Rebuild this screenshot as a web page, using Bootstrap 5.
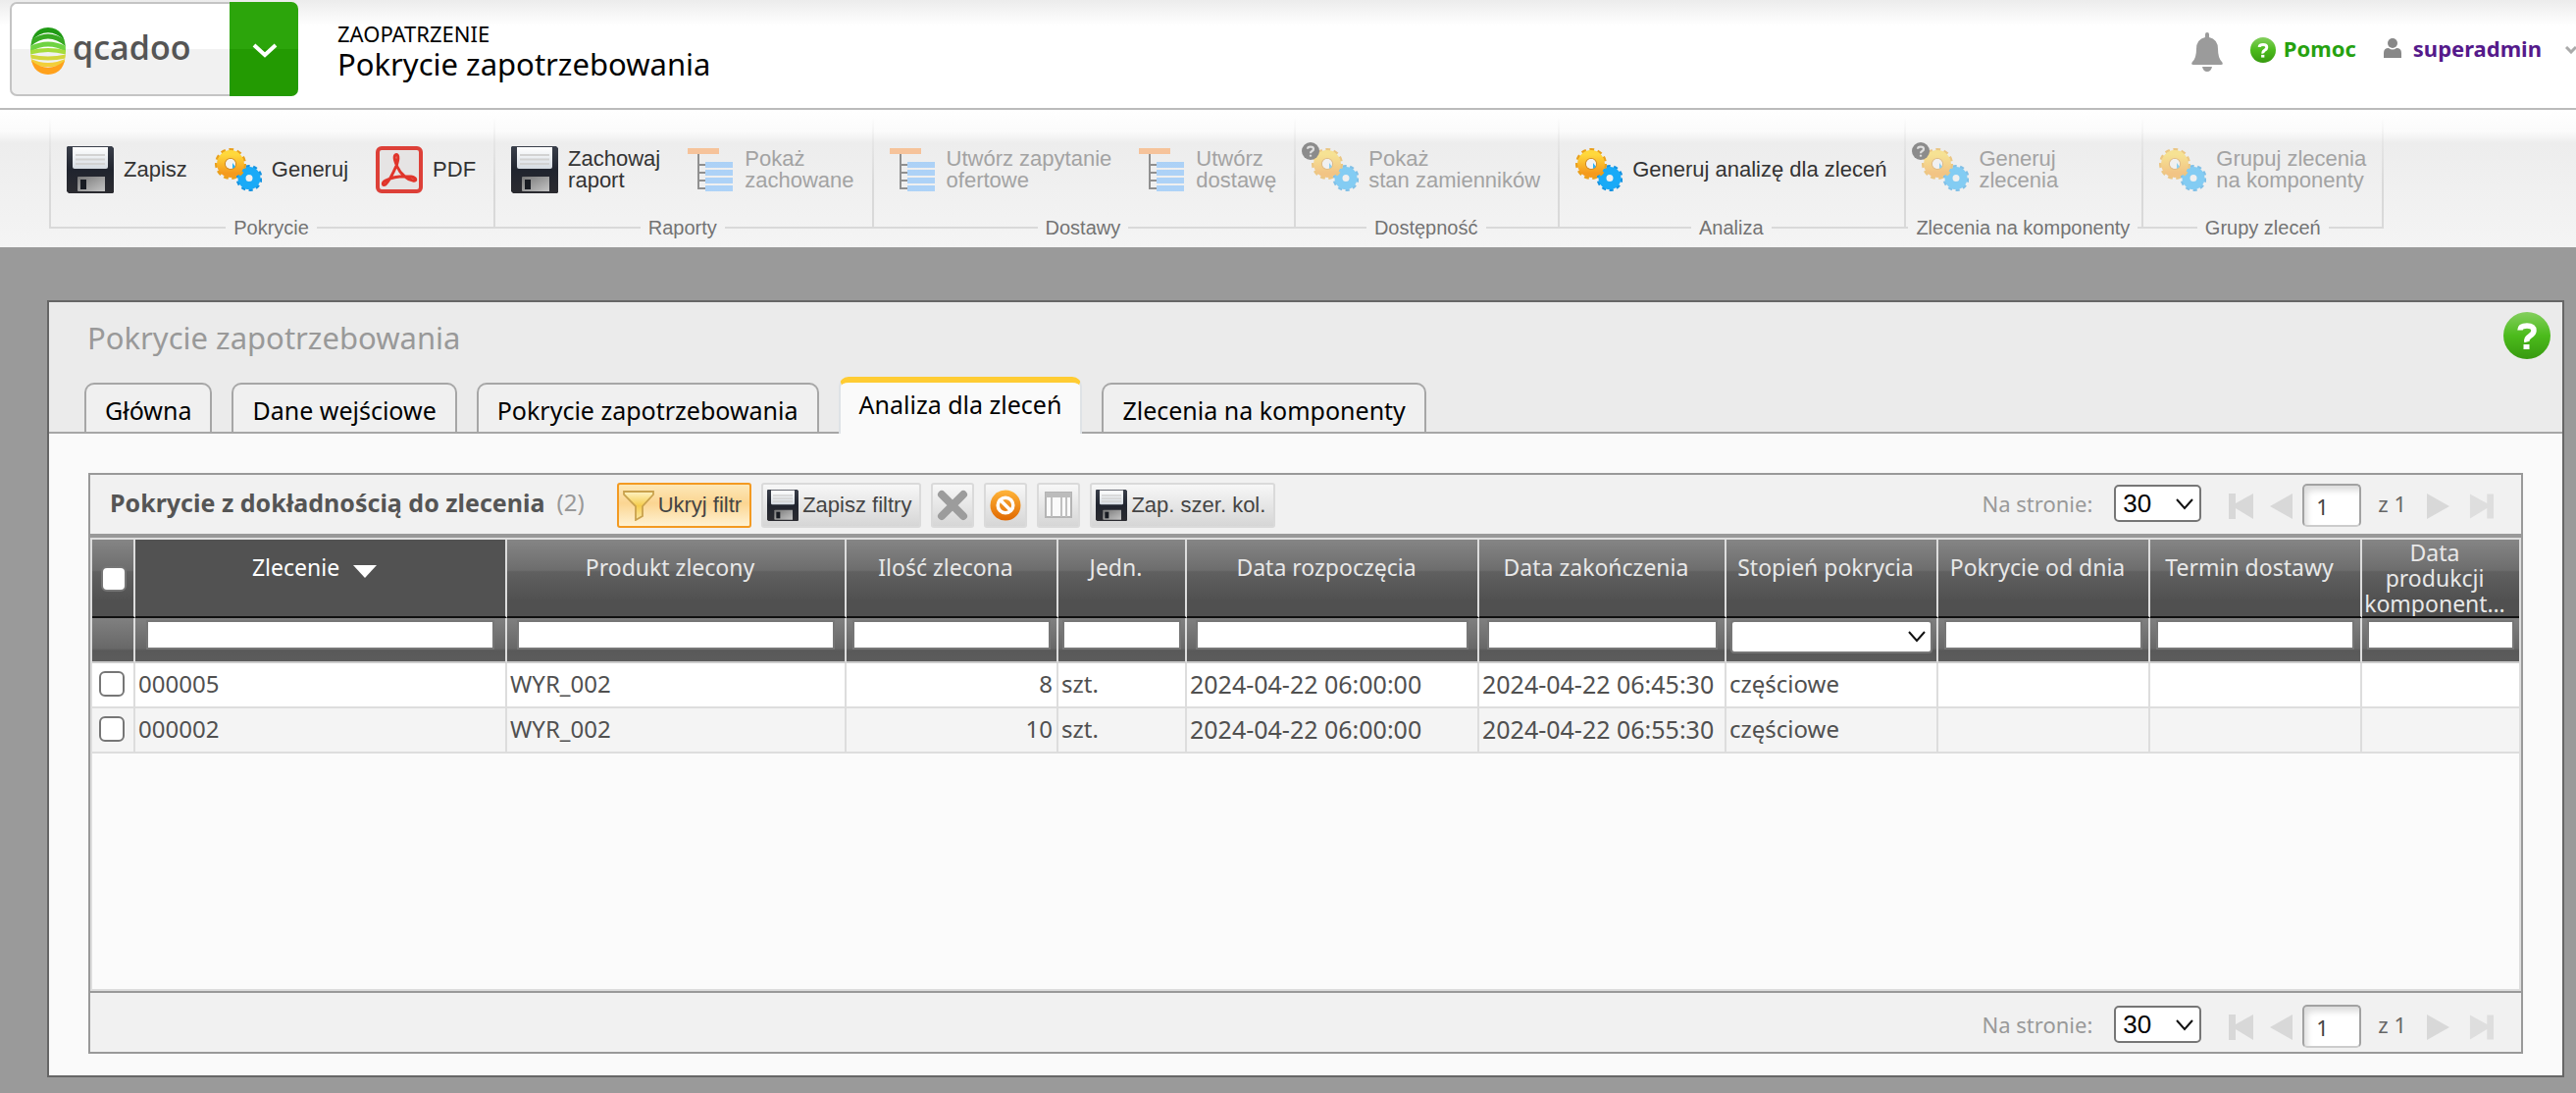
<!DOCTYPE html>
<html lang="pl">
<head>
<meta charset="utf-8">
<meta name="viewport" content="width=device-width, initial-scale=1">
<title>Pokrycie zapotrzebowania - qcadoo</title>
<link href="https://cdn.jsdelivr.net/npm/bootstrap@5.3.0/dist/css/bootstrap.min.css" rel="stylesheet">
<style>
:root{--ui:"Noto Sans","Open Sans",sans-serif;--arial:"Liberation Sans",Arial,sans-serif}
body{font-family:var(--ui);font-size:24px;line-height:36px;color:#000;background:#9a9a9a}
svg{display:block;flex:none}
a{text-decoration:none}
/* top bar */
.topbar{height:112px;border-bottom:2px solid #bbb;background:linear-gradient(#ececec,#fff 26px)}
.brand{margin:2px 0 0 10px;height:96px;width:294px}
.brand-logo{width:224px;border:2px solid #c4c4c4;border-right:0;border-radius:7px 0 0 7px;background:linear-gradient(#fff 50%,#f1f1f1 50%);padding:0 0 4px 19px;color:#555;font:600 34px/40px "Open Sans",sans-serif;gap:7px}
.brand-logo:hover{color:#555}
.brand-menu{width:70px;border:0;border-radius:0 7px 7px 0;background:linear-gradient(#2ca50b 50%,#239a02 50%);padding:4px 0 0 2px}
.page-head{padding:19px 0 0 40px}
.page-head p{font-size:22px;line-height:30px}
.page-head h1{font-size:31px;line-height:32px;font-weight:400}
.userbar{height:98px;font-size:22px;font-weight:700}
.link-help{color:#26a10f}.link-user{color:#551a8b}
/* ribbon */
.ribbon{height:140px;padding:8px 0 8px 50px;font-family:var(--arial);background:linear-gradient(#fff,#fbfbfb 22px,#ededed 34px,#f4f4f4)}
.rib-group{background:linear-gradient(transparent,#d9d9d9 60%) left top/2px calc(100% - 12px) no-repeat}
.rib-group:last-child{background:linear-gradient(transparent,#d9d9d9 60%) left top/2px calc(100% - 12px) no-repeat,linear-gradient(transparent,#d9d9d9 60%) right top/2px calc(100% - 12px) no-repeat}
.rib-buttons{padding:5px 4px 0 4px}
.rib-btn{border:0;background:none;padding:0 14px;gap:10px;color:#333;font-size:22px;line-height:22px;text-align:left;white-space:nowrap}
.rib-btn:disabled{color:#a3a3a3}
.rib-btn:disabled svg{opacity:.5}
.rib-label{height:24px;font-size:20px;line-height:24px;color:#737373;white-space:nowrap}
.rib-label::before,.rib-label::after{content:"";flex:1 0 4px;height:2px;background:#d9d9d9}
.rib-label span{padding:0 8px}
.icon-holder{position:relative}
.rib-btn .hint{position:absolute;left:-10px;top:-4px}
.rib-btn:disabled .hint{opacity:1}
/* window */
.win{margin:54px 12px 16px 48px;border:2px solid #666;background:#fafafa}
.win-head{background:#ebebeb;padding-top:15px}
.win-title{font-size:31px;line-height:42px;color:#999;margin:0 0 19px 39px;font-weight:400}
.help-btn{border:0;background:none;padding:0;margin:-5px 12px 0 0}
.nav-tabs{border-bottom:2px solid #a6a6a6;padding-left:36px;gap:20px;align-items:flex-end}
.nav-tabs .nav-link,.nav-tabs .nav-link:hover{color:#000;background:#f0f0f0;border:2px solid #a6a6a6;border-bottom:0;border-radius:10px 10px 0 0;padding:8px 19px 4px;margin-bottom:0;font-size:25px}
.nav-tabs .nav-link.active{background:#fafafa;border-top:6px solid #fc3;padding:4px 19px 12px;margin-bottom:-2px}
.win-body{padding:40px 40px 22px 40px}
/* grid */
.gridbox{border:2px solid #999;background:#fafafa}
.grid-bar{height:64px;border-bottom:4px solid #999;background:#f1f1f1;padding:0 28px 0 20px}
.grid-name{font-size:25px;font-weight:700;color:#555;padding-bottom:4px}
.grid-count{color:#999;padding:0 33px 4px 12px}
.grid-tools{gap:10px;padding-top:2px}
.tool{border:2px solid #dadada;border-radius:3px;background:linear-gradient(#f7f7f7,#d6d6d6);height:46px;padding:0 4px;gap:4px;font:22px/22px var(--arial);color:#444}
.tool.has-text{padding-right:8px}
.tool.on{border-color:#f39a22;background:linear-gradient(#fde8b8,#fbd592 45%,#fff2d2)}
.pager{font-size:22px;color:#999}
.pager label,.pages{padding-bottom:3px}
.pager button{border:0;background:none;padding:3px 0 0}
.pager select{appearance:none;width:89px;height:38px;border:2px solid #767676;border-radius:5px;background:#fff;color:#000;font:26px/34px var(--arial);padding:0 0 2px 7px;margin:0 28px 2px 22px}
.sel{position:relative}
.sel svg{position:absolute;pointer-events:none}
.pager .sel svg{right:36px;top:14px}
.pager input{width:60px;height:44px;border:2px solid #a2a2a2;border-bottom-color:#ccc;border-radius:5px;box-shadow:inset 5px 7px 6px -2px #ddd;padding:2px 0 0 12px;font:22px/30px var(--ui);color:#444;margin:1px 17px 0 9px}
.pages{color:#666}
.grid-foot{height:62px;border-top:2px solid #999;background:#f1f1f1;padding:6px 28px 0 21px}
.grid-area{border:2px solid #ddd;background:#fbfbfb}
.gtab{width:100%;table-layout:fixed;border-collapse:separate;border-spacing:0}
.gtab th,.gtab td{border-right:2px solid #ddd;padding:0;overflow:hidden;white-space:nowrap}
.gtab tr>:last-child{border-right:0}
.gtab .cols th{height:80px;border-bottom:2px solid #111;background:linear-gradient(#858585,#6d6d6d 40%,#606060 42%,#505050 80%);color:#e8e8e8;font-size:23px;line-height:26px;font-weight:400;text-align:center;vertical-align:top;padding:15px 12px 0 0}
.gtab .cols th.sorted{background:#525252;color:#fff}
.gtab .cols th.three{padding-top:0}
.gtab .cols th.pick{padding:27px 0 0}
.gtab .filters td{height:46px;border-bottom:2px solid #ccc;background:linear-gradient(#808080,#686868 70%,#595959 75%,#5c5c5c);vertical-align:top;padding-top:2px;text-align:center}
.filters input{display:block;width:94%;height:30px;margin:0 auto;border:2px solid #767676;background:#fff}
.filters select{appearance:none;display:block;width:96%;height:34px;margin:0 auto;border:2px solid #767676;border-radius:4px;background:#fff}
.filters .sel svg{right:11px;top:13px}
.gtab tbody td{height:46px;border-bottom:2px solid #ddd;background:#fff;color:#505050;padding:0 4px 2px 3px;line-height:40px}
.gtab tbody td.stamp{font-size:25px}
.gtab tbody tr:nth-child(even) td{background:#f4f4f4}
.cbx{appearance:none;display:block;width:26px;height:26px;border:2px solid #767676;border-radius:6px;background:#fff}
.pick .cbx{margin-left:9px}
</style>
<script src="https://cdn.jsdelivr.net/npm/bootstrap@5.3.0/dist/js/bootstrap.bundle.min.js"></script>
</head>
<body class="d-flex flex-column min-vh-100">
<svg width="0" height="0" class="position-absolute" aria-hidden="true">
<defs>
<linearGradient id="gPaper" x1="0" y1="0" x2="0" y2="1"><stop offset="0" stop-color="#fff"/><stop offset="1" stop-color="#d5dbe2"/></linearGradient>
<linearGradient id="gSteel" x1="0" y1="0" x2="1" y2="1"><stop offset="0" stop-color="#777"/><stop offset="1" stop-color="#c4c4c4"/></linearGradient>
<linearGradient id="gBody" x1="0" y1="0" x2="0" y2="1"><stop offset="0" stop-color="#3a3f4a"/><stop offset=".5" stop-color="#20242e"/><stop offset="1" stop-color="#2b2b30"/></linearGradient>
<linearGradient id="gGold" x1="0" y1="0" x2="0" y2="1"><stop offset="0" stop-color="#ffd83c"/><stop offset="1" stop-color="#f59a1c"/></linearGradient>
<linearGradient id="gGreen" x1="0" y1="0" x2="0" y2="1"><stop offset="0" stop-color="#84cf5e"/><stop offset=".5" stop-color="#4cbb1c"/><stop offset="1" stop-color="#379a10"/></linearGradient>
<linearGradient id="gOr" x1="0" y1="0" x2="0" y2="1"><stop offset="0" stop-color="#ffb53a"/><stop offset="1" stop-color="#e06800"/></linearGradient>
<linearGradient id="gFun" x1="0" y1="0" x2="0" y2="1"><stop offset="0" stop-color="#fff3c4"/><stop offset=".5" stop-color="#f5cc4c"/><stop offset="1" stop-color="#fbe7a8"/></linearGradient>
<clipPath id="egg"><path d="M18 0C30 0 36 9 36 24s-6 24-18 24S0 39 0 24 6 0 18 0z"/></clipPath>
<symbol id="disk" viewBox="0 0 48 48"><path fill="url(#gBody)" d="M1 0h45l2 2v45l-1 1H2l-2-2V1z"/><path fill="url(#gPaper)" d="M6 1h36v20q0 2-2 2H8q-2 0-2-2z"/><path stroke="#d2d2d2" stroke-width="2" d="M9 9h30M9 13.500h30M9 18h30"/><path fill="url(#gSteel)" d="M11 32q0-1 1-1h27v15H12q-1 0-1-1z"/><path fill="#181b22" d="M14 34h6v10h-6z"/></symbol>
<symbol id="gears" viewBox="0 0 48 48"><g fill="none"><circle cx="35" cy="32.500" r="11.700" stroke="#1592e0" stroke-width="3.600" stroke-dasharray="3.980 3.370"/><circle cx="35" cy="32.500" r="7.500" stroke="#19aaf7" stroke-width="8"/><circle cx="16" cy="18" r="14" stroke="#e9a01c" stroke-width="4" stroke-dasharray="4.600 3.400"/><circle cx="16" cy="18" r="9.400" stroke="url(#gGold)" stroke-width="9"/><circle cx="16" cy="18" r="5.500" stroke="#cf8a2a" stroke-width="1.200"/></g><circle cx="16" cy="18" r="5" fill="#f3f3f3"/><path fill="#2bb1f5" d="M18 17l3 4-3 2z"/></symbol>
<symbol id="pdf" viewBox="0 0 48 48"><rect x="2" y="2" width="44" height="44" rx="4" fill="#e6e4e4" stroke="#dd4038" stroke-width="4"/><path fill="none" stroke="#e0352b" stroke-width="3" stroke-linejoin="round" d="M20 9c3-2 4 3 1 11-3 7-7 15-11 19-3 2-4-2 0-4 8-4 16-5 26-4 6 1 6 5 2 4-6-1-13-7-16-14-2-5-4-10-2-12z"/></symbol>
<symbol id="tree" viewBox="0 0 48 48"><path fill="#ff9a4a" d="M0 2h32v6H0z"/><path fill="none" stroke="#333" stroke-width="2" d="M11 8v35h8M11 19h8M11 27h8M11 35h8"/><path fill="#6db6ff" d="M18 16h28v6H18zM18 24h28v6H18zM18 32h28v6H18zM18 40h28v6H18z"/></symbol>
<symbol id="ask" viewBox="0 0 48 48"><circle cx="24" cy="24" r="24" fill="url(#gGreen)"/><path fill="none" stroke="#fff" stroke-width="5.500" d="M17 18.500q0-4.500 7-4.500t7 5q0 3-4 5.500t-3 6"/><path fill="#fff" d="M20.500 33h6v5h-6z"/></symbol>
<symbol id="askgrey" viewBox="0 0 48 48"><circle cx="24" cy="24" r="24" fill="#8b8b8b"/><path fill="none" stroke="#ddd" stroke-width="6" d="M16 18q0-6 8-6t8 6q0 4-4 6t-4 6"/><path fill="#ddd" d="M21 34h6v5h-6z"/></symbol>
<symbol id="first" viewBox="0 0 26 26"><path fill="#d8d8d8" d="M0 0h7v10L25 0v26L7 15v11H0z"/></symbol>
<symbol id="prev" viewBox="0 0 24 26"><path fill="#d8d8d8" d="M23 0v26L0 13z"/></symbol>
<symbol id="chev" viewBox="0 0 18 12"><path fill="none" stroke="#111" stroke-width="2" d="M1 1l8 9 8-9"/></symbol>
</defs>
</svg>

<header class="topbar d-flex flex-none">
  <div class="brand d-flex">
    <a href="#" class="brand-logo d-flex align-items-center">
      <svg class="mt-2" width="36" height="48" viewBox="0 0 36 48"><g clip-path="url(#egg)" fill="none"><path stroke="#1f9a14" stroke-width="6" d="M-2 12Q18-8 38 12"/><path stroke="#37a922" stroke-width="5" d="M-2 18Q18 0 38 18"/><path stroke="#6fd342" stroke-width="5" d="M-2 23Q18 11 38 23"/><path stroke="#a5dc3c" stroke-width="4" d="M-2 26Q18 20 38 26"/><path stroke="#d3d63b" stroke-width="4" d="M-2 29Q18 34 38 29"/><path stroke="#f2cf3a" stroke-width="4" d="M-2 33Q18 43 38 33"/><path stroke="#ffa11c" stroke-width="7" d="M-2 36Q18 53 38 36"/></g></svg>
      <span>qcadoo</span>
    </a>
    <button type="button" class="brand-menu d-flex align-items-center justify-content-center" aria-label="Menu"><svg width="26" height="16" viewBox="0 0 26 16"><path fill="none" stroke="#fff" stroke-width="4" d="M2 2l11 10L24 2"/></svg></button>
  </div>
  <div class="page-head"><p class="m-0">ZAOPATRZENIE</p><h1 class="m-0">Pokrycie zapotrzebowania</h1></div>
  <nav class="userbar d-flex align-items-center ms-auto">
    <a href="#" aria-label="Powiadomienia" class="me-4 pt-2"><svg width="32" height="40" viewBox="0 0 32 40"><path fill="#9b9b9b" d="M14 5V2q0-2 2-2t2 2v3q9 2 9 12 0 9 4 13 2 3-1 3H2q-3 0-1-3 4-4 4-13Q5 7 14 5zM11 35h10q-1 5-5 5t-5-5z"/></svg></a>
    <a href="#" class="link-help d-flex align-items-center gap-2 ms-1"><svg class="mt-1" width="26" height="26"><use href="#ask"/></svg>Pomoc</a>
    <a href="#" class="link-user d-flex align-items-center ps-4 ms-1"><svg class="me-2" width="22" height="20" viewBox="0 0 22 20"><circle cx="9" cy="5" r="5" fill="#888"/><path fill="#888" d="M0 20v-5q0-5 5-5 4 3 8 0 5 0 5 5v5z"/></svg>superadmin<svg class="ms-4 mt-1" width="11" height="8" viewBox="0 0 11 8"><path fill="none" stroke="#aaa" stroke-width="3" d="M1 1l5 5 5-5"/></svg></a>
  </nav>
</header>

<div class="ribbon d-flex" role="toolbar">
  <section class="rib-group d-flex flex-column">
    <div class="rib-buttons d-flex flex-grow-1">
      <button type="button" class="rib-btn d-flex align-items-center"><svg width="48" height="48"><use href="#disk"/></svg>Zapisz</button>
      <button type="button" class="rib-btn d-flex align-items-center"><svg width="48" height="48"><use href="#gears"/></svg>Generuj</button>
      <button type="button" class="rib-btn d-flex align-items-center"><svg width="48" height="48"><use href="#pdf"/></svg>PDF</button>
    </div>
    <div class="rib-label d-flex align-items-center"><span>Pokrycie</span></div>
  </section>
  <section class="rib-group d-flex flex-column">
    <div class="rib-buttons d-flex flex-grow-1">
      <button type="button" class="rib-btn d-flex align-items-center"><svg width="48" height="48"><use href="#disk"/></svg><span>Zachowaj<br>raport</span></button>
      <button type="button" class="rib-btn d-flex align-items-center" disabled><svg width="48" height="48"><use href="#tree"/></svg><span>Pokaż<br>zachowane</span></button>
    </div>
    <div class="rib-label d-flex align-items-center"><span>Raporty</span></div>
  </section>
  <section class="rib-group d-flex flex-column">
    <div class="rib-buttons d-flex flex-grow-1">
      <button type="button" class="rib-btn d-flex align-items-center" disabled><svg width="48" height="48"><use href="#tree"/></svg><span>Utwórz zapytanie<br>ofertowe</span></button>
      <button type="button" class="rib-btn d-flex align-items-center" disabled><svg width="48" height="48"><use href="#tree"/></svg><span>Utwórz<br>dostawę</span></button>
    </div>
    <div class="rib-label d-flex align-items-center"><span>Dostawy</span></div>
  </section>
  <section class="rib-group d-flex flex-column">
    <div class="rib-buttons d-flex flex-grow-1">
      <button type="button" class="rib-btn d-flex align-items-center" disabled><span class="icon-holder"><svg width="48" height="48"><use href="#gears"/></svg><svg class="hint" width="18" height="18"><use href="#askgrey"/></svg></span><span>Pokaż<br>stan zamienników</span></button>
    </div>
    <div class="rib-label d-flex align-items-center"><span>Dostępność</span></div>
  </section>
  <section class="rib-group d-flex flex-column">
    <div class="rib-buttons d-flex flex-grow-1">
      <button type="button" class="rib-btn d-flex align-items-center"><svg width="48" height="48"><use href="#gears"/></svg>Generuj analizę dla zleceń</button>
    </div>
    <div class="rib-label d-flex align-items-center"><span>Analiza</span></div>
  </section>
  <section class="rib-group d-flex flex-column">
    <div class="rib-buttons d-flex flex-grow-1">
      <button type="button" class="rib-btn d-flex align-items-center" disabled><span class="icon-holder"><svg width="48" height="48"><use href="#gears"/></svg><svg class="hint" width="18" height="18"><use href="#askgrey"/></svg></span><span>Generuj<br>zlecenia</span></button>
    </div>
    <div class="rib-label d-flex align-items-center"><span>Zlecenia na komponenty</span></div>
  </section>
  <section class="rib-group d-flex flex-column">
    <div class="rib-buttons d-flex flex-grow-1">
      <button type="button" class="rib-btn d-flex align-items-center" disabled><svg width="48" height="48"><use href="#gears"/></svg><span>Grupuj zlecenia<br>na komponenty</span></button>
    </div>
    <div class="rib-label d-flex align-items-center"><span>Grupy zleceń</span></div>
  </section>
</div>

<main class="win d-flex flex-column flex-grow-1">
  <div class="win-head">
    <div class="d-flex justify-content-between align-items-start">
      <h2 class="win-title">Pokrycie zapotrzebowania</h2>
      <button type="button" class="help-btn" aria-label="Pomoc"><svg width="48" height="48"><use href="#ask"/></svg></button>
    </div>
    <ul class="nav nav-tabs">
      <li class="nav-item"><a class="nav-link" href="#">Główna</a></li>
      <li class="nav-item"><a class="nav-link" href="#">Dane wejściowe</a></li>
      <li class="nav-item"><a class="nav-link" href="#">Pokrycie zapotrzebowania</a></li>
      <li class="nav-item"><a class="nav-link active" aria-current="page" href="#">Analiza dla zleceń</a></li>
      <li class="nav-item"><a class="nav-link" href="#">Zlecenia na komponenty</a></li>
    </ul>
  </div>
  <div class="win-body d-flex flex-column flex-grow-1">
    <div class="gridbox d-flex flex-column flex-grow-1">
      <div class="grid-bar d-flex align-items-center">
        <div class="grid-name">Pokrycie z dokładnością do zlecenia</div><div class="grid-count">(2)</div>
        <div class="grid-tools d-flex">
          <button type="button" class="tool has-text on d-flex align-items-center"><svg width="32" height="32" viewBox="0 0 32 32"><path fill="url(#gFun)" stroke="#c9a24e" stroke-width="1.800" d="M1 2h30v3L20 17v10l-7 4V17L1 5z"/></svg>Ukryj filtr</button>
          <button type="button" class="tool has-text d-flex align-items-center"><svg width="32" height="32"><use href="#disk"/></svg>Zapisz filtry</button>
          <button type="button" class="tool d-flex align-items-center" aria-label="Wyczyść"><svg width="32" height="32" viewBox="0 0 32 32"><path fill="none" stroke="#9c9c9c" stroke-width="8" stroke-linecap="round" d="M5 5l22 22M27 5L5 27"/></svg></button>
          <button type="button" class="tool d-flex align-items-center" aria-label="Anuluj filtr"><svg width="32" height="32" viewBox="0 0 32 32"><circle cx="16" cy="16" r="15.500" fill="url(#gOr)"/><circle cx="16" cy="16" r="7.800" fill="none" stroke="#fff" stroke-width="3.500"/><path stroke="#fff" stroke-width="3.500" d="M11 11l10 10"/></svg></button>
          <button type="button" class="tool d-flex align-items-center" aria-label="Kolumny"><svg width="32" height="32" viewBox="0 0 32 32"><path fill="#fafafa" stroke="#b4b4b4" stroke-width="2" d="M3 3h26v25H3z"/><path fill="#bcbcbc" d="M3 3h26v5H3z"/><path stroke="#c0c0c0" stroke-width="2" d="M9 8v20M19 8v20M24 8v20"/></svg></button>
          <button type="button" class="tool has-text d-flex align-items-center"><svg width="32" height="32"><use href="#disk"/></svg>Zap. szer. kol.</button>
        </div>
        <div class="pager d-flex align-items-center ms-auto">
          <label for="per1">Na stronie:</label>
          <span class="sel"><select id="per1"><option>30</option></select><svg width="18" height="12"><use href="#chev"/></svg></span>
          <button type="button" class="me-3" aria-label="Pierwsza"><svg width="26" height="26"><use href="#first"/></svg></button>
          <button type="button" aria-label="Poprzednia"><svg width="24" height="26"><use href="#prev"/></svg></button>
          <input type="text" value="1" aria-label="Strona">
          <span class="pages me-3 pe-1">z 1</span>
          <button type="button" class="me-3 pe-1" aria-label="Następna"><svg width="24" height="26" viewBox="0 0 24 26"><path fill="#d8d8d8" d="M1 0v26l23-13z"/></svg></button>
          <button type="button" aria-label="Ostatnia"><svg width="25" height="26" viewBox="0 0 26 26"><path fill="#dedede" d="M26 0h-7v10L1 0v26l18-11v11h7z"/></svg></button>
        </div>
      </div>
      <div class="grid-area flex-grow-1">
        <table class="gtab">
          <colgroup><col style="width:44px"><col style="width:379px"><col style="width:346px"><col style="width:216px"><col style="width:131px"><col style="width:298px"><col style="width:252px"><col style="width:216px"><col style="width:216px"><col style="width:216px"><col style="width:160px"></colgroup>
          <thead>
            <tr class="cols">
              <th class="pick"><input type="checkbox" class="cbx" aria-label="Zaznacz wszystko"></th>
              <th class="sorted">Zlecenie <svg class="d-inline-block align-middle ms-2 mt-1" width="24" height="13" viewBox="0 0 24 13"><path fill="#fff" d="M0 0h24L12 13z"/></svg></th>
              <th>Produkt zlecony</th><th>Ilość zlecona</th><th>Jedn.</th><th>Data rozpoczęcia</th><th>Data zakończenia</th><th>Stopień pokrycia</th><th>Pokrycie od dnia</th><th>Termin dostawy</th>
              <th class="three">Data<br>produkcji<br>komponent…</th>
            </tr>
            <tr class="filters">
              <td></td>
              <td><input type="text" aria-label="Zlecenie"></td>
              <td><input type="text" aria-label="Produkt zlecony"></td>
              <td><input type="text" aria-label="Ilość zlecona"></td>
              <td><input type="text" aria-label="Jedn."></td>
              <td><input type="text" aria-label="Data rozpoczęcia"></td>
              <td><input type="text" aria-label="Data zakończenia"></td>
              <td class="sel"><select aria-label="Stopień pokrycia"><option></option></select><svg width="18" height="12"><use href="#chev"/></svg></td>
              <td><input type="text" aria-label="Pokrycie od dnia"></td>
              <td><input type="text" aria-label="Termin dostawy"></td>
              <td><input type="text" aria-label="Data produkcji"></td>
            </tr>
          </thead>
          <tbody>
            <tr><td><input type="checkbox" class="cbx ms-1" aria-label="000005"></td><td>000005</td><td>WYR_002</td><td class="text-end">8</td><td>szt.</td><td class="stamp">2024-04-22 06:00:00</td><td class="stamp">2024-04-22 06:45:30</td><td>częściowe</td><td></td><td></td><td></td></tr>
            <tr><td><input type="checkbox" class="cbx ms-1" aria-label="000002"></td><td>000002</td><td>WYR_002</td><td class="text-end">10</td><td>szt.</td><td class="stamp">2024-04-22 06:00:00</td><td class="stamp">2024-04-22 06:55:30</td><td>częściowe</td><td></td><td></td><td></td></tr>
          </tbody>
        </table>
      </div>
      <div class="grid-foot d-flex align-items-center">
        <div class="pager d-flex align-items-center ms-auto">
          <label for="per2">Na stronie:</label>
          <span class="sel"><select id="per2"><option>30</option></select><svg width="18" height="12"><use href="#chev"/></svg></span>
          <button type="button" class="me-3" aria-label="Pierwsza"><svg width="26" height="26"><use href="#first"/></svg></button>
          <button type="button" aria-label="Poprzednia"><svg width="24" height="26"><use href="#prev"/></svg></button>
          <input type="text" value="1" aria-label="Strona">
          <span class="pages me-3 pe-1">z 1</span>
          <button type="button" class="me-3 pe-1" aria-label="Następna"><svg width="24" height="26" viewBox="0 0 24 26"><path fill="#d8d8d8" d="M1 0v26l23-13z"/></svg></button>
          <button type="button" aria-label="Ostatnia"><svg width="25" height="26" viewBox="0 0 26 26"><path fill="#dedede" d="M26 0h-7v10L1 0v26l18-11v11h7z"/></svg></button>
        </div>
      </div>
    </div>
  </div>
</main>
</body>
</html>
